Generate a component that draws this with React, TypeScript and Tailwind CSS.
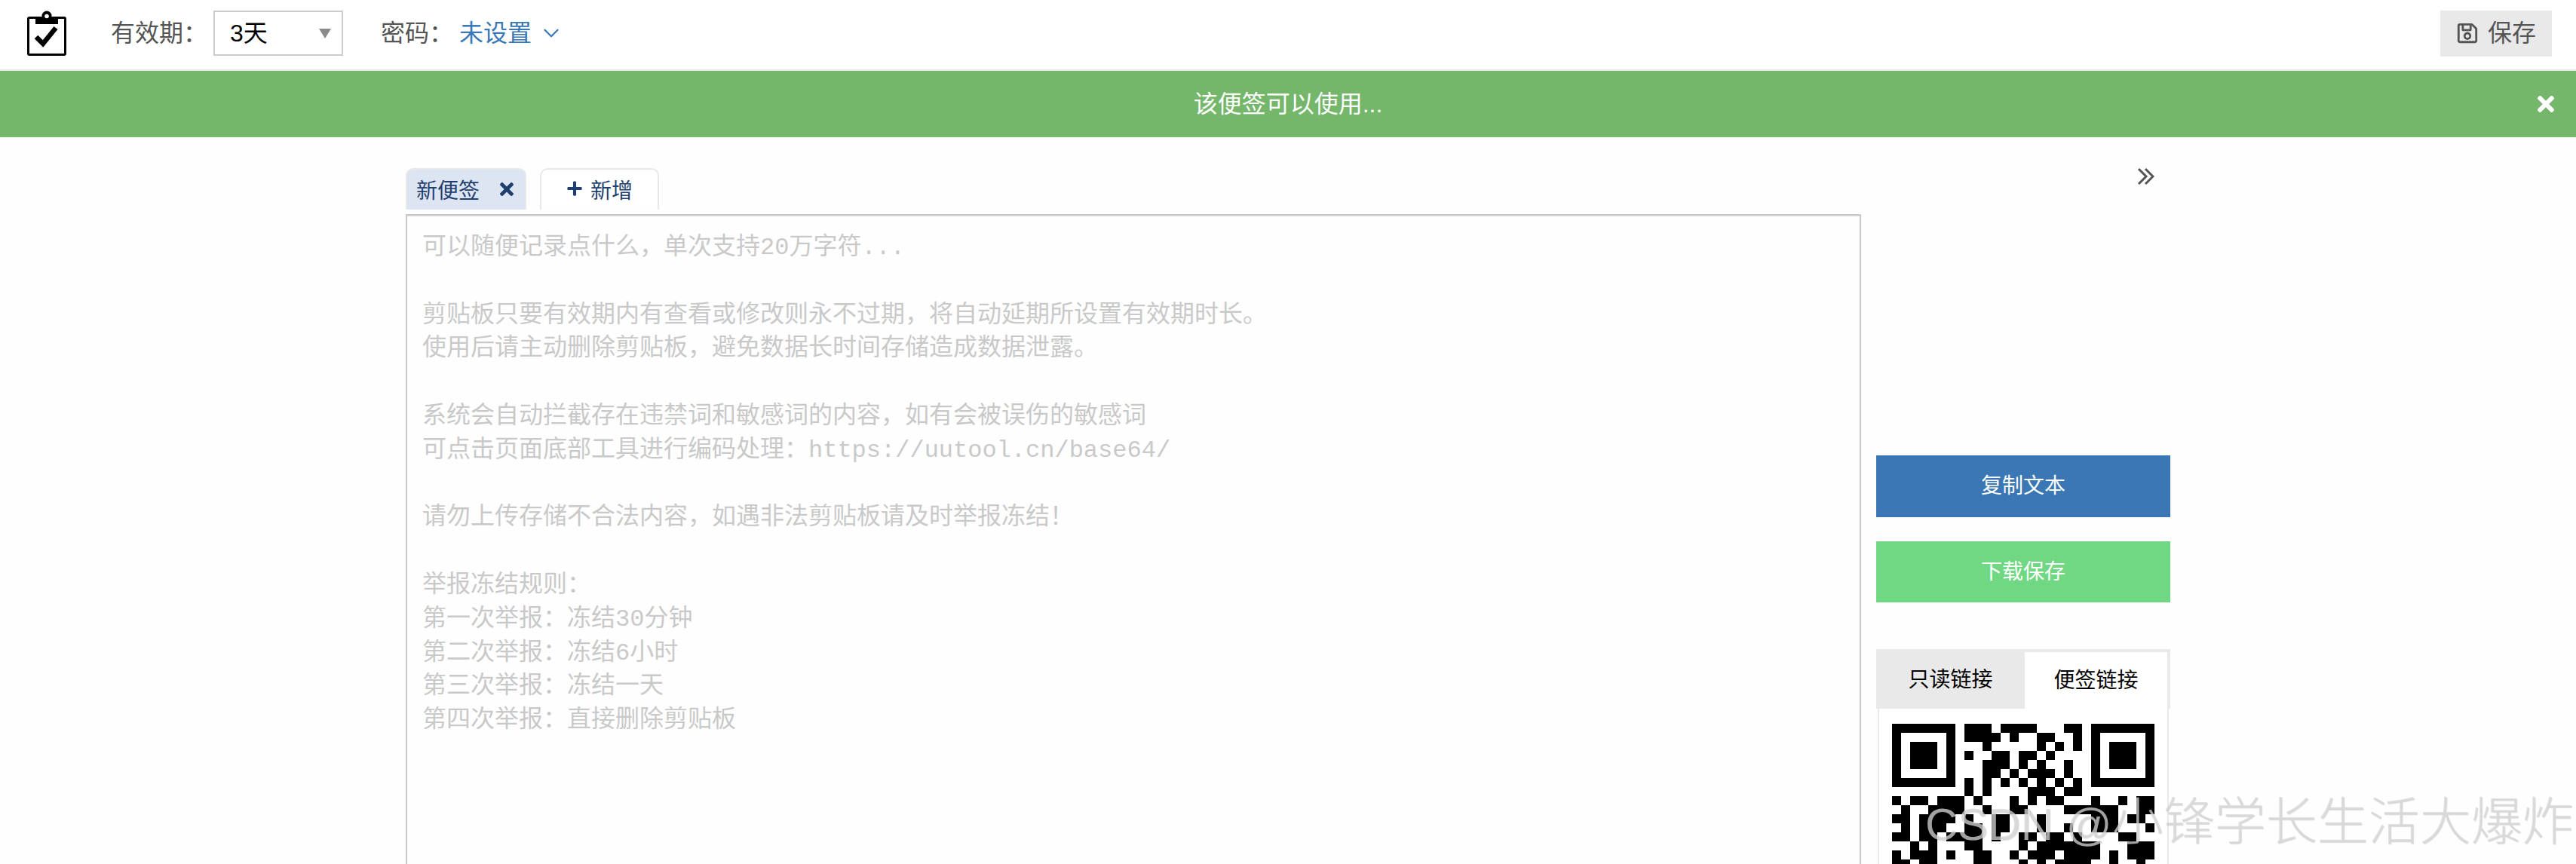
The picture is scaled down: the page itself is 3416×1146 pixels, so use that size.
import { ChevronDown } from 'lucide-react';
import { FaPlus, FaRegSave, FaTimes } from 'react-icons/fa';

const hint = `可以随便记录点什么，单次支持20万字符...

剪贴板只要有效期内有查看或修改则永不过期，将自动延期所设置有效期时长。
使用后请主动删除剪贴板，避免数据长时间存储造成数据泄露。

系统会自动拦截存在违禁词和敏感词的内容，如有会被误伤的敏感词
可点击页面底部工具进行编码处理：https://uutool.cn/base64/

请勿上传存储不合法内容，如遇非法剪贴板请及时举报冻结！

举报冻结规则：
第一次举报：冻结30分钟
第二次举报：冻结6小时
第三次举报：冻结一天
第四次举报：直接删除剪贴板`;

const qrRows = [
  '#######.' + '###.####...##' + '.#######',
  '#.....#.' + '####.#..##..#' + '.#.....#',
  '#.###.#.' + '..#.....#.#.#' + '.#.###.#',
  '#.###.#.' + '#..##.##.#...' + '.#.###.#',
  '#.###.#.' + '..###.#.#..#.' + '.#.###.#',
  '#.....#.' + '..##.#.###.#.' + '.#.....#',
  '#######.' + '#.#.#.#.#.#.#' + '.#######',
  '........' + '#.#....###.##' + '........',
  '#.##.###.#' + '...#.#.##.' + '..#..#.##',
  '.#..####..' + '#..##....#' + '#####..##',
  '##.####.#.' + '.##...#...' + '..###.##.',
  '.#.###..##' + '.##...#..#' + '..###...#',
  '##.##.####' + '.#..##.##.' + '#....##..',
  '..#.#...##' + '....#.####' + '###...###',
  '#.###.#..#' + '#..#.###.#' + '###.#.###',
  '##.##....#' + '#...#.#.##' + '##..#..#.',
];

function ClipboardLogo() {
  return (
    <svg width="52" height="60" viewBox="0 0 52 60" className="shrink-0">
      <rect x="1.5" y="9.5" width="49" height="49" rx="1.5" fill="none" stroke="#000" strokeWidth="3" />
      <path d="M11 8h30v10H11z" fill="#000" />
      <circle cx="26" cy="7" r="6.5" fill="#000" />
      <circle cx="26" cy="7.5" r="2.8" fill="#fff" />
      <path d="M12 35l9 9 L38 23" fill="none" stroke="#000" strokeWidth="6.5" />
    </svg>
  );
}

function QrCode() {
  return (
    <svg width="348" height="192" viewBox="0 0 348 192" className="block" shapeRendering="crispEdges">
      {qrRows.flatMap((row, y) =>
        row.split('').map((cell, x) =>
          cell === '#' ? <rect key={`${x}-${y}`} x={x * 12} y={y * 12} width="12" height="12" fill="#000" /> : null
        )
      )}
    </svg>
  );
}

function Header() {
  return (
    <div className="flex h-[94px] items-center border-b-2 border-[#e8e8e8] bg-white pb-1 pl-9 pr-8 text-[32px] text-[#555]">
      <ClipboardLogo />
      <span className="ml-[59px] w-[136px]">有效期：</span>
      <div className="flex h-[60px] w-[172px] items-center justify-between border-2 border-[#ccc] pl-5 pr-3.5 text-black">
        <span>3天</span>
        <svg width="16" height="13" viewBox="0 0 16 13">
          <path d="M0 0h16L8 13z" fill="#8a8a8a" />
        </svg>
      </div>
      <span className="ml-[50px] w-[104px]">密码：</span>
      <span className="text-[#3a77b4]">未设置</span>
      <ChevronDown size={34} strokeWidth={1.6} className="ml-[9px] text-[#3a77b4]" />
      <button className="ml-auto flex h-[61px] w-[148px] items-center justify-center gap-3 bg-[#e9e9e9] text-[#555]">
        <FaRegSave size={30} />
        <span>保存</span>
      </button>
    </div>
  );
}

function Banner() {
  return (
    <div className="relative flex h-[88px] items-center justify-center bg-[#74b66a] text-[32px] text-white">
      该便签可以使用...
      <FaTimes size={32} className="absolute right-6 top-[28px]" />
    </div>
  );
}

function NoteTabs() {
  return (
    <div className="flex h-[55px] gap-[18px] text-[28px] text-[#1f3f6e]">
      <div className="flex w-[160px] items-center justify-between rounded-t-[10px] border-x-2 border-t-2 border-[#e8e8e8] bg-[#dde4f2] pl-3 pr-[11px] pt-1">
        <span>新便签</span>
        <FaTimes size={26} className="-mt-1.5" />
      </div>
      <div className="flex w-[158px] items-center justify-center gap-2.5 rounded-t-[10px] border-x-2 border-t-2 border-[#e8e8e8] bg-white pt-1">
        <FaPlus size={22} className="-mt-2" />
        <span>新增</span>
      </div>
    </div>
  );
}

function Editor() {
  return (
    <div className="mt-1.5 h-[1000px] border-2 border-[#c8c8c8] px-5 pb-5 pt-[21px] font-['Liberation_Mono','Noto_Sans_CJK_SC',monospace] text-[32px] leading-[1.4] whitespace-pre-line text-[#c9c9c9] shadow-[inset_0_1px_1px_rgba(0,0,0,0.12)]">
      {hint}
    </div>
  );
}

function SidePanel() {
  return (
    <div className="flex w-[390px] shrink-0 flex-col">
      <div className="flex h-[381px] justify-end pr-[21px]">
        <svg width="23" height="24" viewBox="0 0 23 24" className="-mt-px" fill="none" stroke="#555" strokeWidth="3">
          <path d="M2 2l10 10L2 22" />
          <path d="M11 2l10 10-10 10" />
        </svg>
      </div>
      <button className="h-[82px] bg-[#3a77b4] text-[28px] text-white">复制文本</button>
      <button className="mt-8 h-[81px] bg-[#70d882] text-[28px] text-white">下载保存</button>
      <div className="mt-[62px]">
        <div className="flex h-[79px] bg-[#e9e9e9] text-[28px] text-black">
          <div className="flex w-[197px] items-center justify-center pt-0.5">只读链接</div>
          <div className="mr-1 mt-1 flex flex-1 items-center justify-center bg-white">便签链接</div>
        </div>
        <div className="mx-0.5 h-[300px] border-x-2 border-[#e9e9e9] bg-white pl-[17px] pt-5">
          <QrCode />
        </div>
      </div>
    </div>
  );
}

export default function App() {
  return (
    <div className="relative h-[1146px] overflow-hidden bg-[#fefefe] font-['Liberation_Sans','Noto_Sans_CJK_SC',sans-serif]">
      <Header />
      <Banner />
      <div className="mx-[538px] flex gap-5 pt-[41px]">
        <div className="min-w-0 flex-1">
          <NoteTabs />
          <Editor />
        </div>
        <SidePanel />
      </div>
      {/* CSDN watermark burned into the screenshot */}
      <div className="pointer-events-none absolute left-[2553px] top-[1056px] flex items-baseline whitespace-nowrap font-light leading-none text-[rgba(215,215,215,0.75)] [text-shadow:1px_1px_1px_rgba(0,0,0,0.14)]">
        <span className="text-[60px]">CSDN @</span>
        <span className="text-[68px]">小锋学长生活大爆炸</span>
      </div>
    </div>
  );
}
